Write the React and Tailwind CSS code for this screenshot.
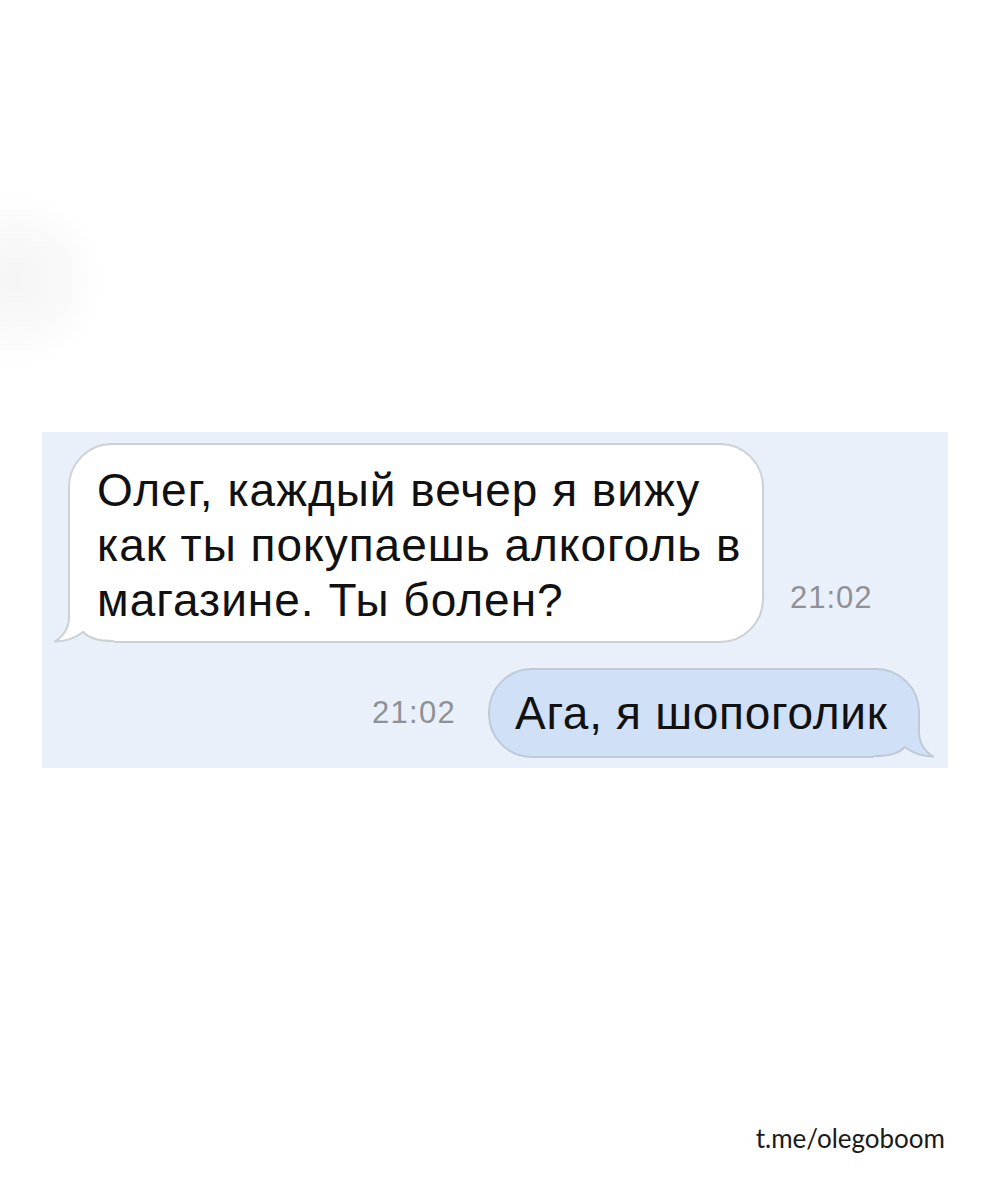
import React from "react";

const PANEL = "#e9f0fa";
const LINE = "#cdd1d6";

// bubble tail drawn over the bottom corner of a bubble
function Tail({ fill, stroke = LINE, side = "left" }) {
  const flip = side === "right";
  return (
    <svg
      width="60"
      height="46"
      viewBox="0 0 60 46"
      className={`absolute bottom-[-2px] ${flip ? "right-[-16px]" : "left-[-16px]"}`}
      style={flip ? { transform: "scaleX(-1)" } : undefined}
    >
      <rect x="0" y="0" width="60" height="46" fill={PANEL} />
      <path
        d="M16 0 L16 20 C16 32 9 40 2 44 C11 44 20 41 29 34 C35 40 43 43 60 43 L60 0 Z"
        fill={fill}
      />
      <path
        d="M15 0 L15 20 C15 32 8 40 1 44.5 C11 44.5 20 42 29 35 C35 41 43 44 60 44"
        fill="none"
        stroke={stroke}
        strokeWidth="2"
      />
    </svg>
  );
}

export default function App() {
  return (
    <div
      className="relative flex h-[1200px] w-[990px] flex-col bg-white"
      style={{ fontFamily: '"Liberation Sans", Arial, sans-serif' }}
    >
      <div className="pointer-events-none absolute left-[-70px] top-[190px] h-[180px] w-[170px] rounded-full bg-[radial-gradient(circle,#f5f5f5_0%,#fafafa_45%,#ffffff_70%)]" />

      <div className="mx-[42px] mt-[432px] flex h-[336px] flex-col bg-[#e9f0fa] pl-[26px] pr-[28px] pt-[11px]">
        <div className="flex items-end">
          <div className="relative h-[200px] w-[696px] rounded-[44px] border-2 border-[#cdd1d6] bg-white pl-[27px] pt-[18px]">
            <Tail fill="#ffffff" side="left" />
            <p className="relative text-[46px] leading-[55px] tracking-[1px] text-[#111111]">
              Олег, каждый вечер я вижу
              <br />
              как ты покупаешь алкоголь в
              <br />
              магазине. Ты болен?
            </p>
          </div>
          <span className="mb-[22px] ml-[26px] text-[31px] tracking-[1px] text-[#8e9297]">21:02</span>
        </div>

        <div className="mt-[25px] flex items-center justify-end">
          <span className="mr-[32px] text-[31px] tracking-[1.3px] text-[#8e9297]">21:02</span>
          <div className="relative flex h-[90px] w-[432px] items-center rounded-[44px] border-2 border-[#bfcad7] bg-[#cfe0f7] pl-[25px]">
            <Tail fill="#cfe0f7" stroke="#bfcad7" side="right" />
            <span className="relative text-[46px] leading-[56px] tracking-[0.7px] text-[#111111]">Ага, я шопоголик</span>
          </div>
        </div>
      </div>

      <div
        className="mt-auto pb-[42px] pr-[45px] text-right text-[26px] text-[#1a1a1a]"
        style={{ fontFamily: "Lato, sans-serif" }}
      >
        t.me/olegoboom
      </div>
    </div>
  );
}
